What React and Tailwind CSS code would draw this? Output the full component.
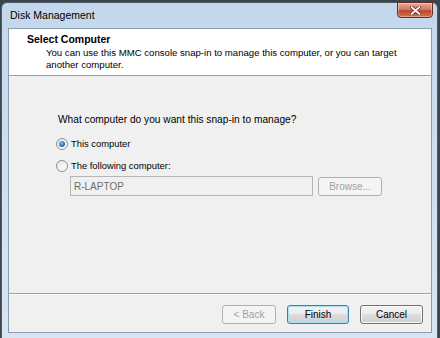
function Radio({ checked }) {
  return (
    <span className="flex items-center justify-center w-[12px] h-[12px] rounded-full border border-[#8e8f8f] bg-gradient-to-br from-[#e6e6e6] to-[#ffffff]">
      {checked && (
        <span className="w-[6px] h-[6px] rounded-full bg-[radial-gradient(circle_at_40%_35%,#7fc4f5,#1b5fa8_70%)]" />
      )}
    </span>
  );
}

function Button({ children, disabled, primary, className = "" }) {
  const border = disabled
    ? "border-[#adb2b5] text-[#a0a0a0] bg-[#f4f4f4]"
    : primary
    ? "border-[#3c7fb1] text-black shadow-[inset_0_0_0_1px_#a8e0f8] bg-[linear-gradient(#f2f2f2,#ebebeb_50%,#dddddd_50%,#cfcfcf)]"
    : "border-[#707070] text-black shadow-[inset_0_0_0_1px_#fbfbfb] bg-[linear-gradient(#f2f2f2,#ebebeb_50%,#dddddd_50%,#cfcfcf)]";
  return (
    <div
      className={`flex items-center justify-center h-[19px] rounded-[3px] border text-[10px] ${border} ${className}`}
    >
      {children}
    </div>
  );
}

export default function App() {
  return (
    <div className="w-[440px] h-[338px] overflow-hidden bg-[#3d454c] pt-[2px] pl-[1px] font-['Liberation_Sans',Arial,sans-serif] text-[10px] text-black">
      {/* window frame */}
      <div className="flex flex-col w-[437px] h-[340px] rounded-t-[6px] border border-[#4e5d6b] bg-gradient-to-b from-[#c3d7ec] via-[#cfdff0] to-[#d8e6f3] px-[6px]">
        {/* title bar */}
        <div className="relative flex items-center h-[25px]">
          <span className="pl-[2px] pt-[1px] text-[10.5px] text-black">Disk Management</span>
          <div className="absolute right-[-2px] top-[-1px] flex items-center justify-center w-[36px] h-[16px] rounded-b-[4px] border border-[#6d2a22] bg-[linear-gradient(#e8a99a,#d47a65_45%,#c2452c_55%,#d1704f)] shadow-[inset_0_0_0_1px_rgba(255,255,255,0.35)]">
            <svg width="11" height="9" viewBox="0 0 11 9">
              <path d="M1.5 1 L9.5 8 M9.5 1 L1.5 8" stroke="#5a2a22" strokeWidth="3.4" strokeLinecap="round" />
              <path d="M1.5 1 L9.5 8 M9.5 1 L1.5 8" stroke="#ffffff" strokeWidth="1.8" strokeLinecap="round" />
            </svg>
          </div>
        </div>

        {/* client area */}
        <div className="flex flex-col w-[424px] h-[305px] border border-[#8a9cae] bg-[#f0f0f0]">
          {/* header */}
          <div className="h-[47px] bg-white border-b border-[#a0a0a0] pl-[18px] pt-[4px]">
            <div className="font-bold text-[10.5px] leading-[13px]">Select Computer</div>
            <div className="pl-[19px] pt-[1px] leading-[12px] text-[9.6px]">
              <div>You can use this MMC console snap-in to manage this computer, or you can target</div>
              <div>another computer.</div>
            </div>
          </div>

          {/* body */}
          <div className="flex-1 flex flex-col pl-[47px] pt-[37px]">
            <div className="pl-[2px] leading-[13px] text-[10.2px]">What computer do you want this snap-in to manage?</div>
            <div className="flex items-center gap-[3px] mt-[11px] h-[14px] text-[9.4px]">
              <Radio checked />
              <span>This computer</span>
            </div>
            <div className="flex items-center gap-[3px] mt-[8px] h-[14px] text-[9.4px]">
              <Radio />
              <span>The following computer:</span>
            </div>
            <div className="flex items-center gap-[5px] mt-[3px] pl-[14px]">
              <div className="flex items-center w-[243px] h-[20px] border border-[#b5b5b5] bg-[#f0f0f0] pl-[3px] text-[#6d6d6d]">
                R-LAPTOP
              </div>
              <Button disabled className="w-[64px] h-[19px]">
                Browse...
              </Button>
            </div>
          </div>

          {/* separator */}
          <div className="h-[1px] bg-[#a0a0a0]" />
          <div className="h-[1px] bg-white" />

          {/* buttons */}
          <div className="flex items-start justify-end gap-[11px] h-[37px] pt-[10px] pr-[8px]">
            <Button disabled className="w-[54px]">&lt; Back</Button>
            <Button primary className="w-[62px]">Finish</Button>
            <Button className="w-[63px]">Cancel</Button>
          </div>
        </div>
      </div>
    </div>
  );
}
